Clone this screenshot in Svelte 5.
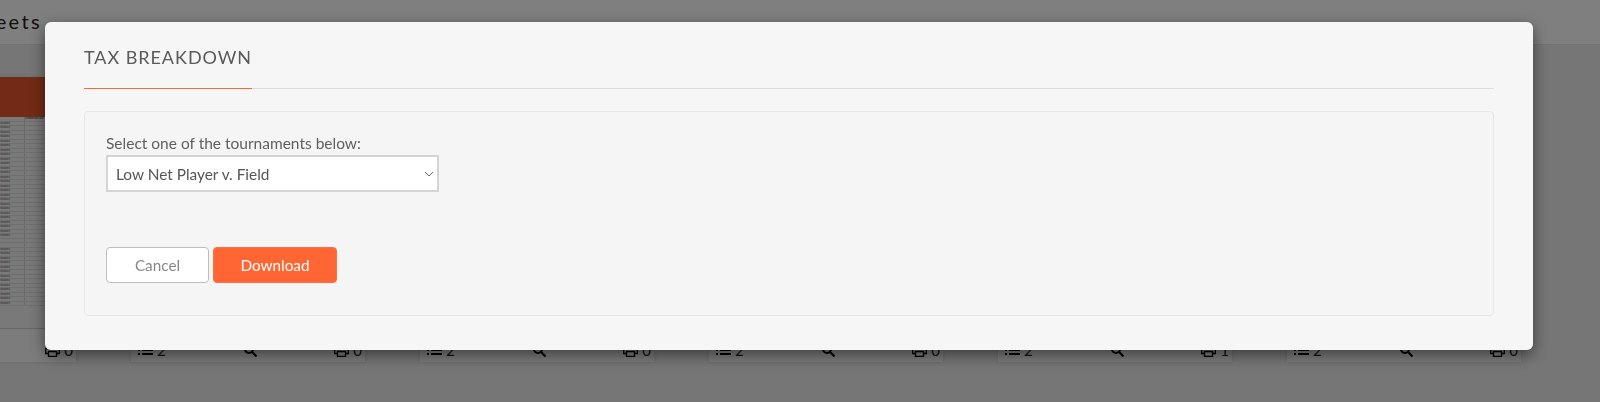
<script>
  const rows = Array.from({ length: 41 }, (_, i) => i);
  const cards = [
    { prints: 0, sheet: true },
    { prints: 0 },
    { prints: 0 },
    { prints: 0 },
    { prints: 1 },
    { prints: 0 }
  ];
</script>

<div class="page">
  <header class="topbar"><span class="page-title">Sheets</span></header>
  <section class="grid">
    {#each cards as card}
      <article class="card">
        <div class="banner"></div>
        <div class="sheet">
          {#if card.sheet}
            <div class="row head"><span class="cell"></span><span class="cell">Graduation</span></div>
            {#each rows as r}
              <div class="row"><span class="cell">{r === 26 || r === 27 ? '' : 'States'}</span><span class="cell"></span></div>
            {/each}
          {/if}
        </div>
        <div class="foot">
          <span class="stat">
            <svg width="15" height="12" viewBox="0 0 15 12"><path d="M0 1h2v2H0zM4 1h11v2H4zM0 5h2v2H0zM4 5h11v2H4zM0 9h2v2H0zM4 9h11v2H4z" /></svg>2
          </span>
          <span class="stat">
            <svg width="13" height="13" viewBox="0 0 13 13"><circle cx="5" cy="5" r="4" fill="none" stroke="#000" stroke-width="2" /><path d="M8 8l4.500 4.500" stroke="#000" stroke-width="2" /></svg>
          </span>
          <span class="stat">
            <svg width="15" height="13" viewBox="0 0 15 13" fill="none" stroke="#000" stroke-width="1.300"><path d="M3.500 4V.7h8V4M3 9.500H.7V4.500h13.600v5H12" /><path d="M3.500 7.500h8v4.800h-8z" /></svg>{card.prints}
          </span>
        </div>
      </article>
    {/each}
  </section>
</div>

<div class="backdrop"></div>

<div class="modal">
  <h2 class="title-row"><span class="title">TAX BREAKDOWN</span></h2>
  <div class="panel">
    <label class="label" for="t">Select one of the tournaments below:</label>
    <div class="select-wrap">
      <select id="t"><option>Low Net Player v. Field</option></select>
      <svg class="chev" width="10" height="6" viewBox="0 0 10 6"><path d="M1 1l4 4 4-4" fill="none" stroke="#666" stroke-width="1" /></svg>
    </div>
    <div class="actions">
      <button class="btn cancel">Cancel</button>
      <button class="btn download">Download</button>
    </div>
  </div>
</div>

<style>
  :global(body) {
    margin: 0;
    background: #ececec;
    font-family: Lato, "Liberation Sans", sans-serif;
    overflow: hidden;
  }
  .page {
    height: 402px;
    overflow: hidden;
    background: #ececec;
  }
  .topbar {
    height: 45px;
    box-sizing: border-box;
    background: #fff;
    padding: 9px 0 0 0;
    border-bottom: 1px solid #e4e4e4;
  }
  .page-title {
    display: block;
    margin-left: -31px;
    font-size: 20px;
    letter-spacing: 2.400px;
    color: #222;
  }
  .grid {
    display: flex;
    gap: 55px;
    margin: 32px 0 0 -158px;
  }
  .card {
    flex: 0 0 234px;
    height: 285px;
    display: flex;
    flex-direction: column;
    background: #f8f8f8;
    box-shadow: 0 0 4px rgba(0, 0, 0, 0.12);
  }
  .banner {
    height: 40px;
    background: #e6562a;
  }
  .sheet {
    height: 211px;
    overflow: hidden;
    background: #f2f2f2;
    border-bottom: 1px solid #ccc;
  }
  .row {
    display: grid;
    grid-template-columns: 25px 1fr;
    height: 4.500px;
    overflow: hidden;
    border-bottom: 1px solid #ddd;
    box-sizing: border-box;
    margin-left: 158px;
  }
  .head .cell {
    font-weight: 700;
  }
  .cell {
    font: 3.500px/3.500px "Liberation Sans", sans-serif;
    color: #555;
    border-right: 1px solid #d4d4d4;
    overflow: hidden;
  }
  .foot {
    flex: 1;
    display: flex;
    justify-content: space-between;
    padding: 14px 3px 0 7px;
    box-sizing: border-box;
  }
  .stat {
    display: inline-flex;
    align-items: center;
    gap: 4px;
    height: 14px;
    font-size: 15px;
    color: #222;
  }
  .backdrop {
    position: fixed;
    inset: 0;
    background: rgba(0, 0, 0, 0.5);
  }
  .modal {
    position: fixed;
    left: 45px;
    top: 22px;
    width: 1488px;
    height: 328px;
    box-sizing: border-box;
    padding: 0 39px;
    background: #f6f6f6;
    border-radius: 6px;
    box-shadow: 0 5px 15px rgba(0, 0, 0, 0.5);
  }
  .title-row {
    margin: 0;
    height: 67px;
    box-sizing: border-box;
    border-bottom: 1px solid #dedede;
    display: flex;
  }
  .title {
    padding-top: 24px;
    height: 67px;
    box-sizing: border-box;
    border-bottom: 1px solid #ff6633;
    font-size: 18px;
    font-weight: 400;
    letter-spacing: 0.960px;
    line-height: 22px;
    color: #5a5a5a;
  }
  .panel {
    margin-top: 22px;
    height: 205px;
    box-sizing: border-box;
    padding: 22px 21px;
    background: #f5f5f5;
    border: 1px solid #e6e6e6;
    border-radius: 4px;
  }
  .label {
    display: block;
    font-size: 15.500px;
    line-height: 18px;
    color: #5f5f5f;
  }
  .select-wrap {
    position: relative;
    width: 333px;
    height: 37px;
    margin-top: 3px;
  }
  select {
    appearance: none;
    width: 100%;
    height: 100%;
    box-sizing: border-box;
    padding: 0 8px;
    background: #fff;
    border: 2px solid #d4d4d4;
    border-radius: 0;
    font: 15.400px Lato, "Liberation Sans", sans-serif;
    color: #555;
  }
  .chev {
    position: absolute;
    right: 5px;
    top: 16px;
  }
  .actions {
    display: flex;
    gap: 4px;
    margin-top: 55px;
  }
  .btn {
    height: 36px;
    box-sizing: border-box;
    border-radius: 4px;
    font: 15.300px Lato, "Liberation Sans", sans-serif;
    padding: 0;
  }
  .cancel {
    width: 103px;
    background: #fff;
    border: 1px solid #bdbdbd;
    color: #888;
  }
  .download {
    width: 124px;
    background: #ff6633;
    border: 1px solid #ff6f40;
    color: #fff;
  }
</style>
